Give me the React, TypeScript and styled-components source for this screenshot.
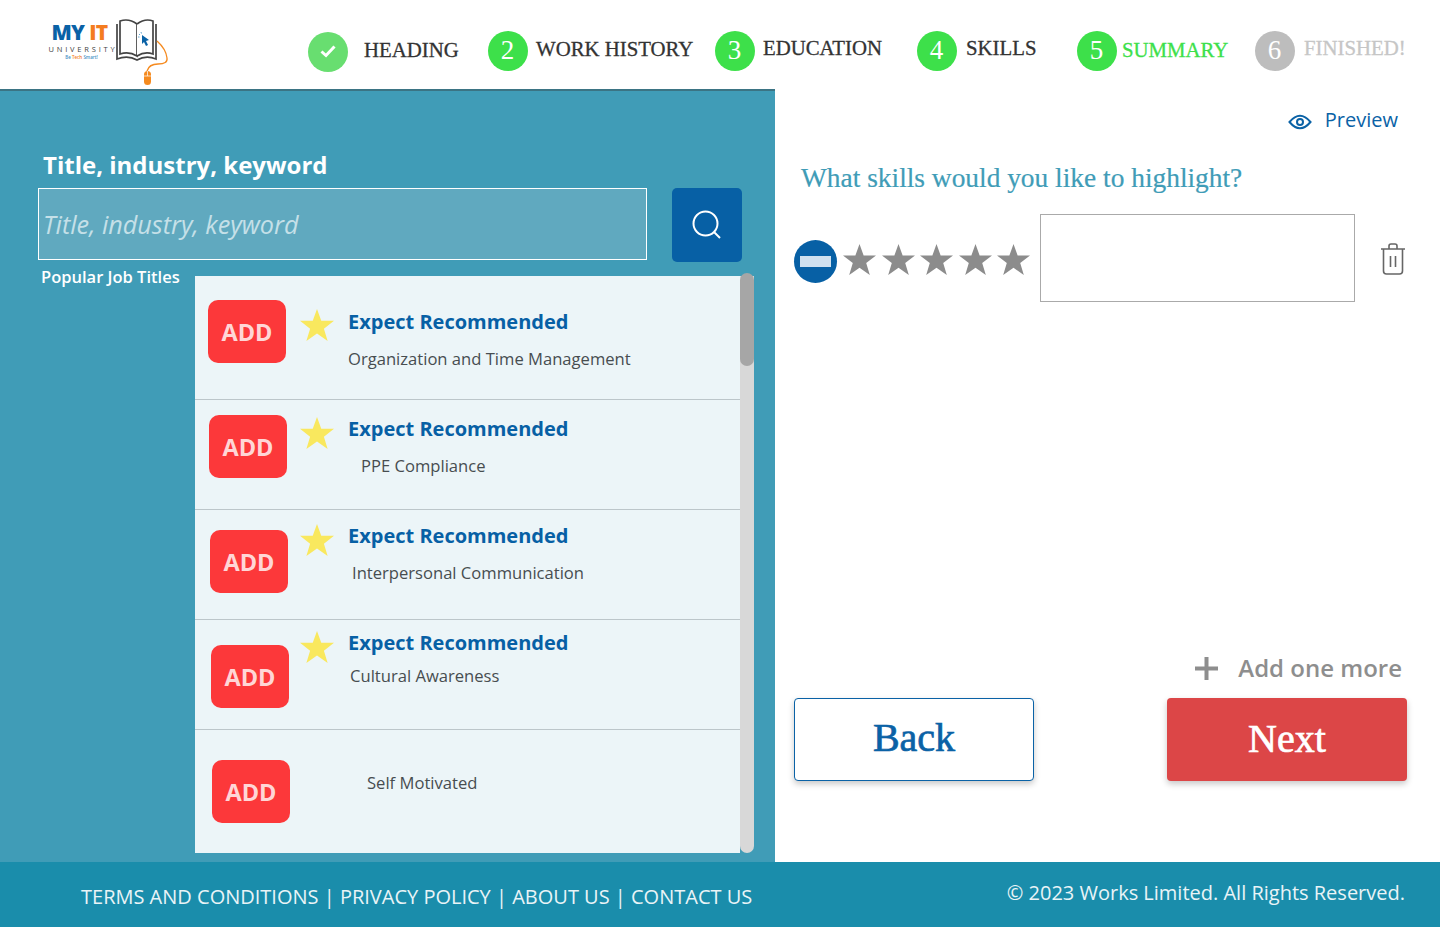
import React from 'react';
import styled, { createGlobalStyle } from 'styled-components';

const SANS = '"Open Sans", "Liberation Sans", sans-serif';
const SERIF = '"Liberation Serif", "DejaVu Serif", serif';

const GlobalStyle = createGlobalStyle`
    html, body {
        margin: 0;
        padding: 0;
        background: #fff;
        font-family: ${SANS};
    }
    * {
        box-sizing: border-box;
    }
`;

const Page = styled.div`
    width: 1440px;
    height: 927px;
    display: flex;
    flex-flow: column nowrap;
    overflow: hidden;
`;

const Header = styled.header`
    height: 89px;
    display: flex;
    align-items: flex-start;
    padding-left: 48px;
    background: #fff;
`;

const Logo = styled.div`
    width: 260px;
    height: 89px;
    display: flex;
    align-items: flex-start;
`;

const LogoText = styled.div`
    width: 67px;
    padding-top: 22px;
    display: flex;
    flex-flow: column nowrap;
    align-items: center;
`;

const LogoName = styled.div`
    font-size: 21px;
    line-height: 21px;
    font-weight: 800;
    letter-spacing: -0.8px;
    color: #0a62a6;
    margin-right: 4px;
    span {
        color: #f47c20;
        margin-left: 5px;
    }
`;

const LogoUniversity = styled.div`
    font-size: 7.5px;
    line-height: 10px;
    margin-top: 1px;
    letter-spacing: 2.8px;
    margin-right: -3px;
    color: #444;
`;

const LogoTag = styled.div`
    font-size: 4.5px;
    line-height: 7px;
    font-weight: 600;
    color: #3f8fc4;
    span {
        color: #f47c20;
    }
`;

const LogoArt = styled.svg`
    margin: 18px 0 0 -1px;
    flex: none;
`;

const Steps = styled.nav`
    display: flex;
    flex: 1;
    padding-top: 31px;
`;

const Step = styled.div<{ $width: number; $top?: number }>`
    width: ${p => p.$width}px;
    flex: none;
    display: flex;
    align-items: flex-start;
    padding-top: ${p => p.$top || 0}px;
`;

const Circle = styled.div<{ $color: string }>`
    width: 40px;
    height: 40px;
    flex: none;
    border-radius: 50%;
    background: ${p => p.$color};
    color: #fff;
    display: flex;
    align-items: center;
    justify-content: center;
    padding: 0 1px 2px 0;
    font-family: ${SERIF};
    font-size: 27px;
`;

const StepLabel = styled.div<{ $color?: string; $gap: number; $drop: number }>`
    margin: ${p => p.$drop}px 0 0 ${p => p.$gap}px;
    font-family: ${SERIF};
    font-size: 20.8px;
    line-height: 26px;
    white-space: nowrap;
    -webkit-text-stroke: 0.3px currentColor;
    color: ${p => p.$color || '#333'};
`;

const Main = styled.main`
    height: 773px;
    display: flex;
`;

const LeftPanel = styled.section`
    width: 775px;
    flex: none;
    background: #409cb7;
    border-top: 2px solid #3b7484;
    padding: 57px 0 9px 0;
    display: flex;
    flex-flow: column nowrap;
`;

const SearchTitle = styled.label`
    margin-left: 43px;
    font-size: 24px;
    line-height: 34px;
    font-weight: 700;
    color: #fff;
`;

const SearchRow = styled.div`
    margin: 6px 0 0 38px;
    display: flex;
    align-items: flex-start;
    gap: 25px;
`;

const SearchField = styled.div`
    width: 609px;
    height: 72px;
    border: 1px solid #fff;
    background: #60a9bf;
    padding: 0 0 0 4px;
    display: flex;
    align-items: center;
    font-size: 25.2px;
    font-weight: 500;
    font-style: italic;
    color: #c5e0e8;
`;

const SearchButton = styled.button`
    width: 70px;
    height: 74px;
    border: 0;
    border-radius: 5px;
    background: #0760a5;
    padding: 0;
    display: flex;
    align-items: center;
    justify-content: center;
`;

const ListRow = styled.div`
    flex: 1;
    min-height: 0;
    margin-top: 14px;
    padding-left: 41px;
    display: flex;
    align-items: stretch;
`;

const PopularLabel = styled.div`
    width: 154px;
    flex: none;
    margin-top: -10px;
    font-size: 16.5px;
    line-height: 22px;
    font-weight: 600;
    color: #fff;
`;

const SkillList = styled.div`
    width: 545px;
    flex: none;
    background: #ecf5f8;
    display: flex;
    flex-flow: column nowrap;
`;

const SkillRow = styled.div<{ $height?: number }>`
    ${p => (p.$height ? `height: ${p.$height}px;` : 'flex: 1;')}
    display: grid;
    grid-template-columns: 105px 48px 1fr;
    align-items: start;
    border-bottom: 1px solid #bcc6ca;
    &:last-child {
        border-bottom: 0;
    }
`;

const AddButton = styled.button<{ $left: number; $top: number }>`
    width: 78px;
    height: 63px;
    margin: ${p => p.$top}px 0 0 ${p => p.$left}px;
    border: 0;
    border-radius: 10px;
    background: #fc383a;
    color: #ffd6d6;
    font-family: ${SANS};
    font-size: 23.5px;
    font-weight: 700;
    padding: 0;
`;

const StarCell = styled.div<{ $top: number }>`
    margin-top: ${p => p.$top}px;
    display: flex;
`;

const TextCell = styled.div<{ $top: number }>`
    margin-top: ${p => p.$top}px;
    display: flex;
    flex-flow: column nowrap;
`;

const SkillTitle = styled.div`
    font-size: 20px;
    line-height: 28px;
    font-weight: 700;
    color: #0760a5;
`;

const SkillName = styled.div<{ $indent: number; $gap: number }>`
    margin: ${p => p.$gap}px 0 0 ${p => p.$indent}px;
    font-size: 16.6px;
    line-height: 24px;
    font-weight: 500;
    color: #474d50;
`;

const ScrollTrack = styled.div`
    width: 14px;
    flex: none;
    position: relative;
    background: #d8d8d8;
    border-radius: 0 0 7px 7px;
`;

const ScrollThumb = styled.div`
    position: absolute;
    top: -3px;
    left: 0;
    width: 14px;
    height: 93px;
    border-radius: 7px;
    background: #a6a6a6;
`;

const RightPanel = styled.section`
    flex: 1;
    display: flex;
    flex-flow: column nowrap;
    padding: 14px 33px 81px 19px;
`;

const PreviewRow = styled.div`
    display: flex;
    justify-content: flex-end;
    align-items: center;
    gap: 13px;
    padding-right: 9px;
    height: 32px;
    font-size: 20px;
    color: #0a62a6;
    svg {
        margin-top: 5px;
    }
`;

const Question = styled.h2`
    margin: 25px 0 0 7px;
    font-family: ${SERIF};
    font-size: 27.4px;
    line-height: 36px;
    font-weight: 400;
    -webkit-text-stroke: 0.2px currentColor;
    color: #409cb7;
`;

const RatingRow = styled.div`
    margin-top: 18px;
    display: flex;
    align-items: flex-start;
`;

const MinusButton = styled.div`
    width: 43px;
    height: 43px;
    margin-top: 26px;
    flex: none;
    border-radius: 50%;
    background: #0760a5;
    display: flex;
    align-items: center;
    justify-content: center;
    &::after {
        content: '';
        width: 31px;
        height: 11px;
        background: #cfe0ef;
    }
`;

const Stars = styled.div`
    width: 203px;
    flex: none;
    margin-top: 29px;
    padding-left: 6px;
    display: flex;
    gap: 5.5px;
`;

const SkillInput = styled.div`
    width: 315px;
    height: 88px;
    flex: none;
    border: 1px solid #aaa;
`;

const TrashButton = styled.div`
    margin: 29px 0 0 25px;
    display: flex;
`;

const AddMore = styled.div`
    margin-top: auto;
    height: 34px;
    display: flex;
    justify-content: flex-end;
    align-items: center;
    gap: 20px;
    padding: 0 5px 2px 0;
    font-size: 24px;
    font-weight: 600;
    color: #8e8e8e;
    svg {
        margin-top: 3px;
    }
`;

const ActionRow = styled.div`
    margin-top: 13px;
    display: flex;
    justify-content: space-between;
`;

const ActionButton = styled.button<{ $primary?: boolean }>`
    width: 240px;
    height: 83px;
    border-radius: 4px;
    border: ${p => (p.$primary ? '0' : '1px solid #0a62a6')};
    background: ${p => (p.$primary ? '#dc4647' : '#fff')};
    color: ${p => (p.$primary ? '#fff' : '#0a62a6')};
    box-shadow: 0 3px 6px rgba(0, 0, 0, 0.22);
    font-family: ${SERIF};
    font-size: 40px;
    -webkit-text-stroke: 0.7px currentColor;
    padding: 0 0 ${p => (p.$primary ? 2 : 5)}px;
`;

const Footer = styled.footer`
    height: 65px;
    background: #1a8dab;
    color: #e9f4f7;
    display: flex;
    justify-content: space-between;
    padding: 0 35px 0 81px;
    font-size: 20px;
`;

const FooterLinks = styled.div`
    padding-top: 21px;
    line-height: 28px;
`;

const Copyright = styled.div`
    padding-top: 17px;
    line-height: 28px;
`;

const Star = ({ size, color }: { size: number; color: string }) => (
    <svg width={size} height={size} viewBox="0 0 32 32">
        <polygon
            fill={color}
            points="16,1 20,12 32,12 22.5,19.5 26,31 16,24 6,31 9.5,19.5 0,12 12,12"
        />
    </svg>
);

const LogoMark = () => (
    <LogoArt width={57} height={70} viewBox="0 0 57 70" fill="none">
        <path d="M3 6 L3 41 Q14 37 23 42 Q32 37 42 41 L42 6" stroke="#444" strokeWidth="1.7" />
        <path d="M6 3 Q15 0 23 6 L23 38 Q15 33 6 36 Z" stroke="#444" strokeWidth="1.7" fill="#fff" />
        <path d="M23 6 Q31 0 39 3 L39 36 Q31 33 23 38" stroke="#444" strokeWidth="1.7" fill="#fff" />
        <path d="M28 17 L35 22 L32 23 L34 27 L32 28 L30 24 L28 26 Z" fill="#0a62a6" />
        <path d="M25 16 l1 1 M27 14 l0.5 1.5 M24 19 l1.5 0" stroke="#3f8fc4" strokeWidth="0.8" />
        <path d="M43 23 Q52 31 53 40 Q54 46 44 46 Q35 46 33 53" stroke="#f58a1f" strokeWidth="1.3" />
        <rect x="30" y="53" width="7" height="14" rx="3.5" fill="#f58a1f" />
        <path d="M30 58 H37 M33.500 53 V58" stroke="#fff" strokeWidth="0.7" />
    </LogoArt>
);

const steps = [
    { label: 'HEADING', width: 180, gap: 16, drop: 5, top: 1, color: '#68de70', text: '#333' },
    { label: 'WORK HISTORY', n: 2, width: 227, gap: 8, drop: 5, color: '#3de04a', text: '#333' },
    { label: 'EDUCATION', n: 3, width: 202, gap: 8, drop: 4, color: '#3de04a', text: '#333' },
    { label: 'SKILLS', n: 4, width: 160, gap: 9, drop: 4, color: '#3de04a', text: '#333' },
    { label: 'SUMMARY', n: 5, width: 178, gap: 5, drop: 6, color: '#3de04a', text: '#3de04a' },
    { label: 'FINISHED!', n: 6, width: 160, gap: 9, drop: 4, color: '#bdbdbd', text: '#c6c6c6' },
];

const skills = [
    { name: 'Organization and Time Management', height: 124, left: 13, addTop: 24, starTop: 32, textTop: 32, indent: 0, gap: 11, star: true },
    { name: 'PPE Compliance', height: 110, left: 14, addTop: 15, starTop: 16, textTop: 15, indent: 13, gap: 11, star: true },
    { name: 'Interpersonal Communication', height: 110, left: 15, addTop: 20, starTop: 13, textTop: 12, indent: 4, gap: 11, star: true },
    { name: 'Cultural Awareness', height: 110, left: 16, addTop: 25, starTop: 10, textTop: 9, indent: 2, gap: 7, star: true },
    { name: 'Self Motivated', left: 17, addTop: 30, starTop: 0, textTop: 41, indent: 19, gap: 0, star: false },
];

const App = () => (
    <Page>
        <GlobalStyle />
        <Header>
            <Logo>
                <LogoText>
                    <LogoName>MY<span>IT</span></LogoName>
                    <LogoUniversity>UNIVERSITY</LogoUniversity>
                    <LogoTag>Be <span>Tech</span> Smart!</LogoTag>
                </LogoText>
                <LogoMark />
            </Logo>
            <Steps>
                {steps.map(s => (
                    <Step key={s.label} $width={s.width} $top={s.top}>
                        <Circle $color={s.color}>
                            {s.n || (
                                <svg width="18" height="14" viewBox="0 0 18 14" fill="none">
                                    <path d="M2.500 7.500 L7 11.500 L15.500 2.500" stroke="#fff" strokeWidth="3" />
                                </svg>
                            )}
                        </Circle>
                        <StepLabel $color={s.text} $gap={s.gap} $drop={s.drop}>{s.label}</StepLabel>
                    </Step>
                ))}
            </Steps>
        </Header>
        <Main>
            <LeftPanel>
                <SearchTitle>Title, industry, keyword</SearchTitle>
                <SearchRow>
                    <SearchField>Title, industry, keyword</SearchField>
                    <SearchButton>
                        <svg width="30" height="30" viewBox="0 0 30 30" fill="none" stroke="#fff" strokeWidth="2">
                            <circle cx="13.500" cy="13.500" r="12" />
                            <path d="M22 22 L28 28" />
                        </svg>
                    </SearchButton>
                </SearchRow>
                <ListRow>
                    <PopularLabel>Popular Job Titles</PopularLabel>
                    <SkillList>
                        {skills.map(s => (
                            <SkillRow key={s.name} $height={s.height}>
                                <AddButton $left={s.left} $top={s.addTop}>ADD</AddButton>
                                <StarCell $top={s.starTop}>
                                    {s.star && <Star size={34} color="#f9e85e" />}
                                </StarCell>
                                <TextCell $top={s.textTop}>
                                    {s.star && <SkillTitle>Expect Recommended</SkillTitle>}
                                    <SkillName $indent={s.indent} $gap={s.gap}>{s.name}</SkillName>
                                </TextCell>
                            </SkillRow>
                        ))}
                    </SkillList>
                    <ScrollTrack>
                        <ScrollThumb />
                    </ScrollTrack>
                </ListRow>
            </LeftPanel>
            <RightPanel>
                <PreviewRow>
                    <svg width="24" height="18" viewBox="0 0 24 18" fill="none" stroke="#0a62a6" strokeWidth="2">
                        <path d="M1.500 9 Q12 -3.500 22.500 9 Q12 21.500 1.500 9 Z" />
                        <circle cx="12" cy="9" r="3" />
                    </svg>
                    Preview
                </PreviewRow>
                <Question>What skills would you like to highlight?</Question>
                <RatingRow>
                    <MinusButton />
                    <Stars>
                        {[0, 1, 2, 3, 4].map(i => <Star key={i} size={33} color="#8c8c8c" />)}
                    </Stars>
                    <SkillInput />
                    <TrashButton>
                        <svg width="26" height="32" viewBox="0 0 26 32" fill="none" stroke="#666" strokeWidth="1.600">
                            <path d="M1 6 H25 M9 6 V3 Q9 1 11 1 H15 Q17 1 17 3 V6" />
                            <path d="M3.500 6 V28 Q3.500 31 6.500 31 H19.500 Q22.500 31 22.500 28 V6" />
                            <path d="M10.500 13 V24 M15.500 13 V24" />
                        </svg>
                    </TrashButton>
                </RatingRow>
                <AddMore>
                    <svg width="23" height="23" viewBox="0 0 23 23" fill="#8e8e8e">
                        <rect x="0" y="9.500" width="23" height="4" />
                        <rect x="9.500" y="0" width="4" height="23" />
                    </svg>
                    Add one more
                </AddMore>
                <ActionRow>
                    <ActionButton>Back</ActionButton>
                    <ActionButton $primary>Next</ActionButton>
                </ActionRow>
            </RightPanel>
        </Main>
        <Footer>
            <FooterLinks>TERMS AND CONDITIONS | PRIVACY POLICY | ABOUT US | CONTACT US</FooterLinks>
            <Copyright>© 2023 Works Limited. All Rights Reserved.</Copyright>
        </Footer>
    </Page>
);

export default App;
